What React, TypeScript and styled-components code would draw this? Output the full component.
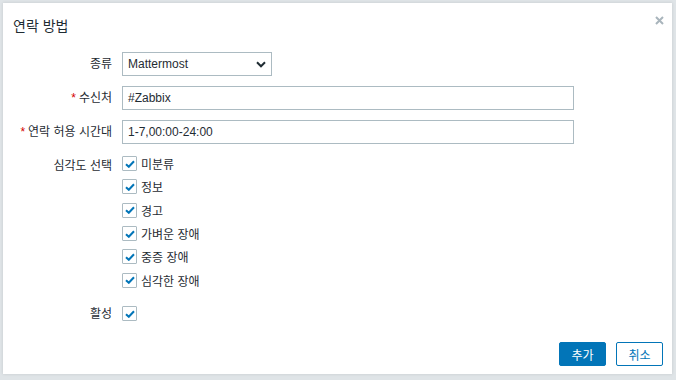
import React from 'react';
import styled, { createGlobalStyle } from 'styled-components';

const Global = createGlobalStyle`
  html, body {
    margin: 0;
    padding: 0;
    background: #dfe4e7;
    font-family: "Liberation Sans", Arial, "Noto Sans CJK KR", sans-serif;
    font-size: 12px;
    color: #1f2c33;
  }
`;

const Page = styled.div`
  width: 676px;
  height: 380px;
  padding: 3px 4px 6px 3px;
  box-sizing: border-box;
`;

const Dialog = styled.div`
  position: relative;
  background: #fff;
  height: 100%;
  box-shadow: 0 0 3px rgba(0, 0, 0, 0.12);
  display: flex;
  flex-direction: column;
`;

const Header = styled.div`
  height: 44px;
  padding: 0 10px;
  display: flex;
  align-items: center;
`;

const Title = styled.h4`
  margin: 0;
  font-size: 14px;
  font-weight: normal;
  color: #1f2c33;
  padding-top: 0;
`;

const Close = styled.button`
  position: absolute;
  top: 10px;
  right: 6px;
  width: 14px;
  height: 14px;
  padding: 0;
  border: 0;
  background: none;
  display: flex;
  align-items: center;
  justify-content: center;
`;

const Form = styled.div`
  display: grid;
  grid-template-columns: 109px 1fr;
  column-gap: 10px;
  row-gap: 10px;
  padding: 5px 98px 0 0;
  align-items: start;
`;

const Label = styled.div`
  text-align: right;
  line-height: 24px;
  white-space: nowrap;
`;

const Star = styled.span`
  color: #d40000;
  margin-right: 3px;
`;

const Select = styled.div`
  width: 150px;
  height: 24px;
  box-sizing: border-box;
  border: 1px solid #acbbc2;
  display: flex;
  align-items: center;
  justify-content: space-between;
  padding: 0 5px;
`;

const Input = styled.div`
  height: 24px;
  box-sizing: border-box;
  border: 1px solid #acbbc2;
  display: flex;
  align-items: center;
  padding: 0 5px;
`;

const List = styled.div`
  display: flex;
  flex-direction: column;
  margin-top: -2px;
`;

const Item = styled.label<{ $h?: number }>`
  height: ${p => p.$h ?? 23.3}px;
  display: flex;
  align-items: center;
  gap: 4px;
`;

const Box = styled.span`
  width: 15px;
  height: 15px;
  border: 1px solid #acbbc2;
  box-sizing: border-box;
  display: flex;
  align-items: center;
  justify-content: center;
  background: #fff;
  border-radius: 1px;
`;

const Footer = styled.div`
  margin-top: auto;
  display: flex;
  justify-content: flex-end;
  gap: 10px;
  padding: 0 9px 8px 0;
`;

const Button = styled.button<{ $alt?: boolean }>`
  height: 24px;
  min-width: 47px;
  padding: 0 10px;
  box-sizing: border-box;
  font-family: inherit;
  font-size: 12px;
  border: 1px solid #0275b8;
  border-radius: 2px;
  background: ${p => (p.$alt ? '#fff' : '#0275b8')};
  color: ${p => (p.$alt ? '#0275b8' : '#fff')};
`;

const Check = () => (
  <Box>
    <svg width="10" height="8" viewBox="0 0 10 8">
      <path d="M1 4.2 L3.8 6.8 L9 1.2" fill="none" stroke="#0275b8" strokeWidth="2" />
    </svg>
  </Box>
);

const severities = ['미분류', '정보', '경고', '가벼운 장애', '중증 장애', '심각한 장애'];

const App = () => (
  <>
    <Global />
    <Page>
      <Dialog>
        <Header>
          <Title>연락 방법</Title>
        </Header>
        <Close>
          <svg width="9" height="9" viewBox="0 0 9 9">
            <path d="M1 1 L8 8 M8 1 L1 8" stroke="#a9b5bc" strokeWidth="2" />
          </svg>
        </Close>
        <Form>
          <Label>종류</Label>
          <div>
            <Select>
              <span>Mattermost</span>
              <svg width="10" height="7" viewBox="0 0 10 7">
                <path d="M1 1.3 L5 5.3 L9 1.3" fill="none" stroke="#1f2c33" strokeWidth="2" />
              </svg>
            </Select>
          </div>

          <Label><Star>*</Star>수신처</Label>
          <Input>#Zabbix</Input>

          <Label><Star>*</Star>연락 허용 시간대</Label>
          <Input>1-7,00:00-24:00</Input>

          <Label>심각도 선택</Label>
          <List>
            {severities.map(s => (
              <Item key={s}>
                <Check />
                <span>{s}</span>
              </Item>
            ))}
          </List>

          <Label>활성</Label>
          <Item $h={24}>
            <Check />
          </Item>
        </Form>
        <Footer>
          <Button>추가</Button>
          <Button $alt>취소</Button>
        </Footer>
      </Dialog>
    </Page>
  </>
);

export default App;
